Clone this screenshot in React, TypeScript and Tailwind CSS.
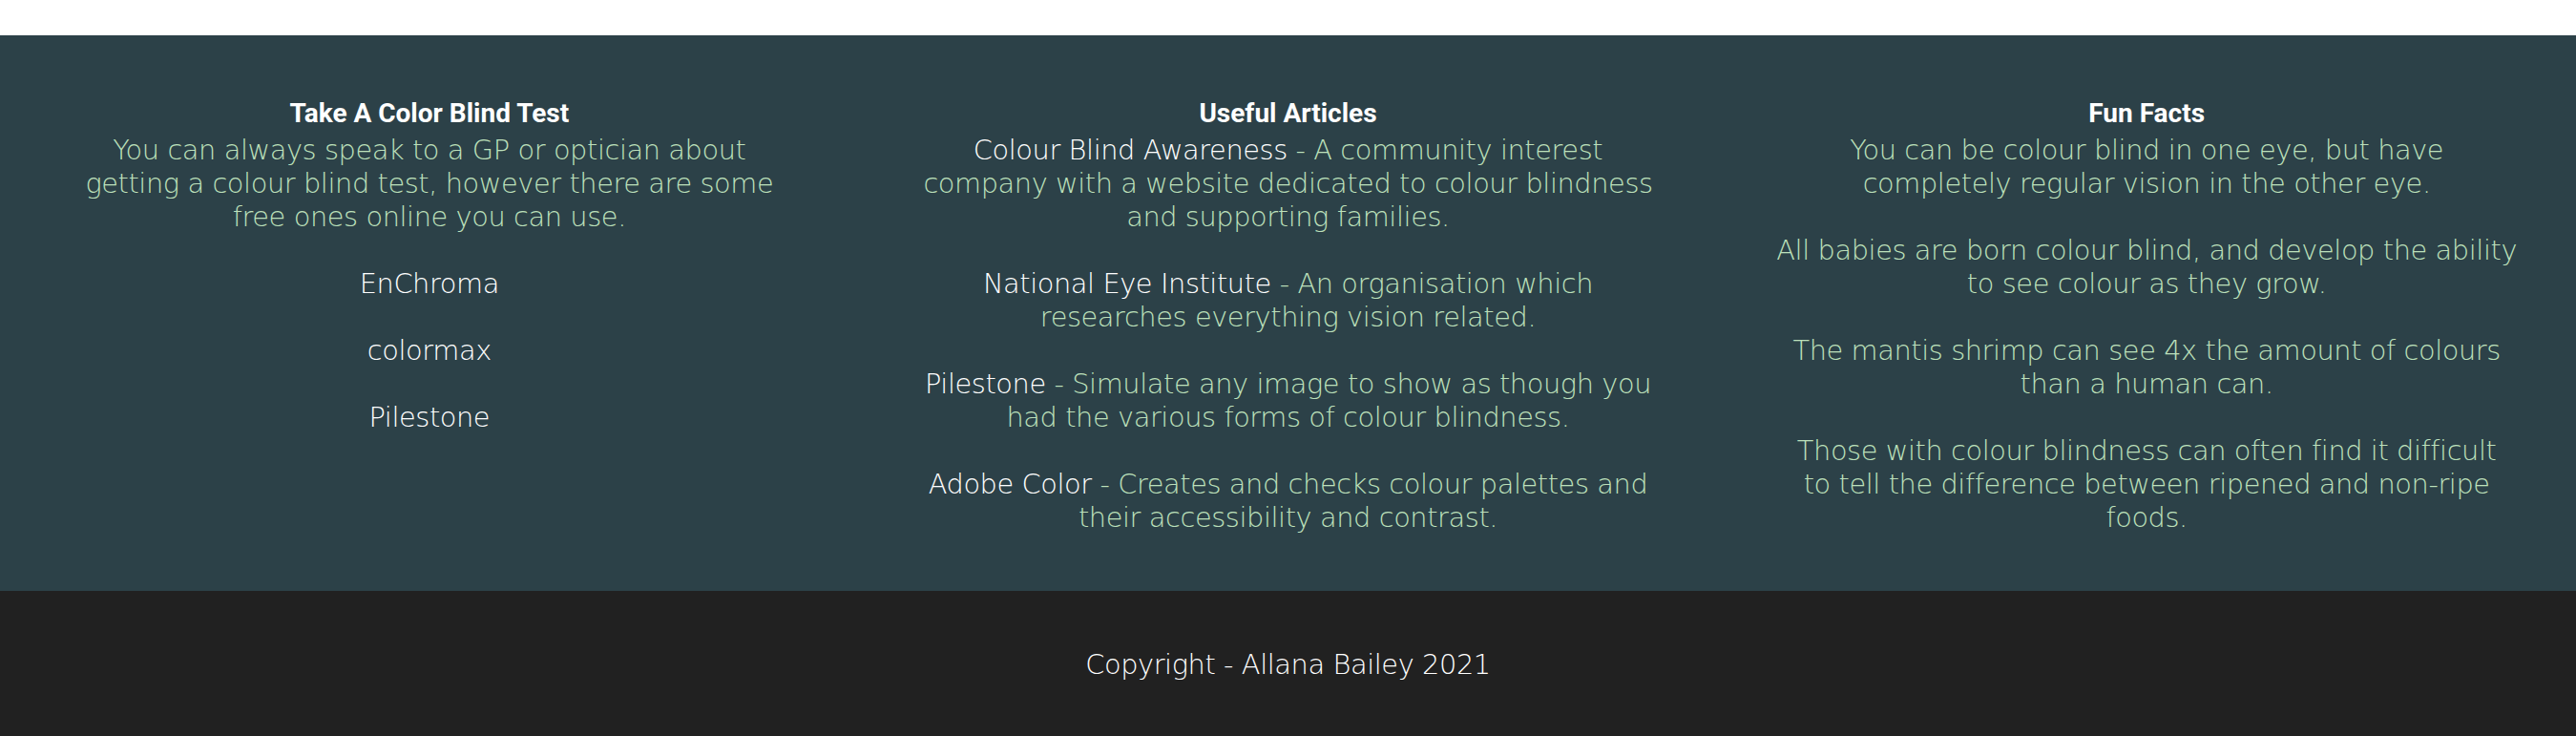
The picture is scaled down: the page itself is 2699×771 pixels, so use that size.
const body = "font-['DejaVu_Sans',sans-serif] font-light text-[28.8px] leading-[35px] tracking-[-0.4px]";

function Column({ title, children }: { title: string; children: React.ReactNode }) {
  return (
    <div className="px-[59px] text-center">
      <h3 className="font-['Roboto',sans-serif] font-bold text-[28px] leading-[33px] text-white mb-[5px]">{title}</h3>
      <div className={`${body} text-[#bde0bb] flex flex-col items-center gap-[35px]`}>{children}</div>
    </div>
  );
}

function Link({ children }: { children: React.ReactNode }) {
  return <a className="text-white">{children}</a>;
}

export default function App() {
  return (
    <div className="min-h-screen bg-white">
      <div className="h-[37px] bg-white" />

      <section className="bg-[#2c4148] pt-[65px] pb-[59px] grid grid-cols-3">
        <Column title="Take A Color Blind Test">
          <p className="max-w-[740px]">
            You can always speak to a GP or optician about getting a colour blind test, however there are some
            free ones online you can use.
          </p>
          <p><Link>EnChroma</Link></p>
          <p><Link>colormax</Link></p>
          <p><Link>Pilestone</Link></p>
        </Column>

        <Column title="Useful Articles">
          <p>
            <Link>Colour Blind Awareness</Link> - A community interest company with a website dedicated to colour
            blindness and supporting families.
          </p>
          <p>
            <Link>National Eye Institute</Link> - An organisation which researches everything vision related.
          </p>
          <p>
            <Link>Pilestone</Link> - Simulate any image to show as though you had the various forms of colour
            blindness.
          </p>
          <p>
            <Link>Adobe Color</Link> - Creates and checks colour palettes and their accessibility and contrast.
          </p>
        </Column>

        <Column title="Fun Facts">
          <p>You can be colour blind in one eye, but have completely regular vision in the other eye.</p>
          <p>All babies are born colour blind, and develop the ability to see colour as they grow.</p>
          <p>The mantis shrimp can see 4x the amount of colours than a human can.</p>
          <p className="max-w-[750px]">
            Those with colour blindness can often find it difficult to tell the difference between ripened and
            non-ripe foods.
          </p>
        </Column>
      </section>

      <footer className={`bg-[#212121] pt-[60px] pb-[57px] text-center text-white ${body}`}>
        Copyright - Allana Bailey 2021
      </footer>
    </div>
  );
}
